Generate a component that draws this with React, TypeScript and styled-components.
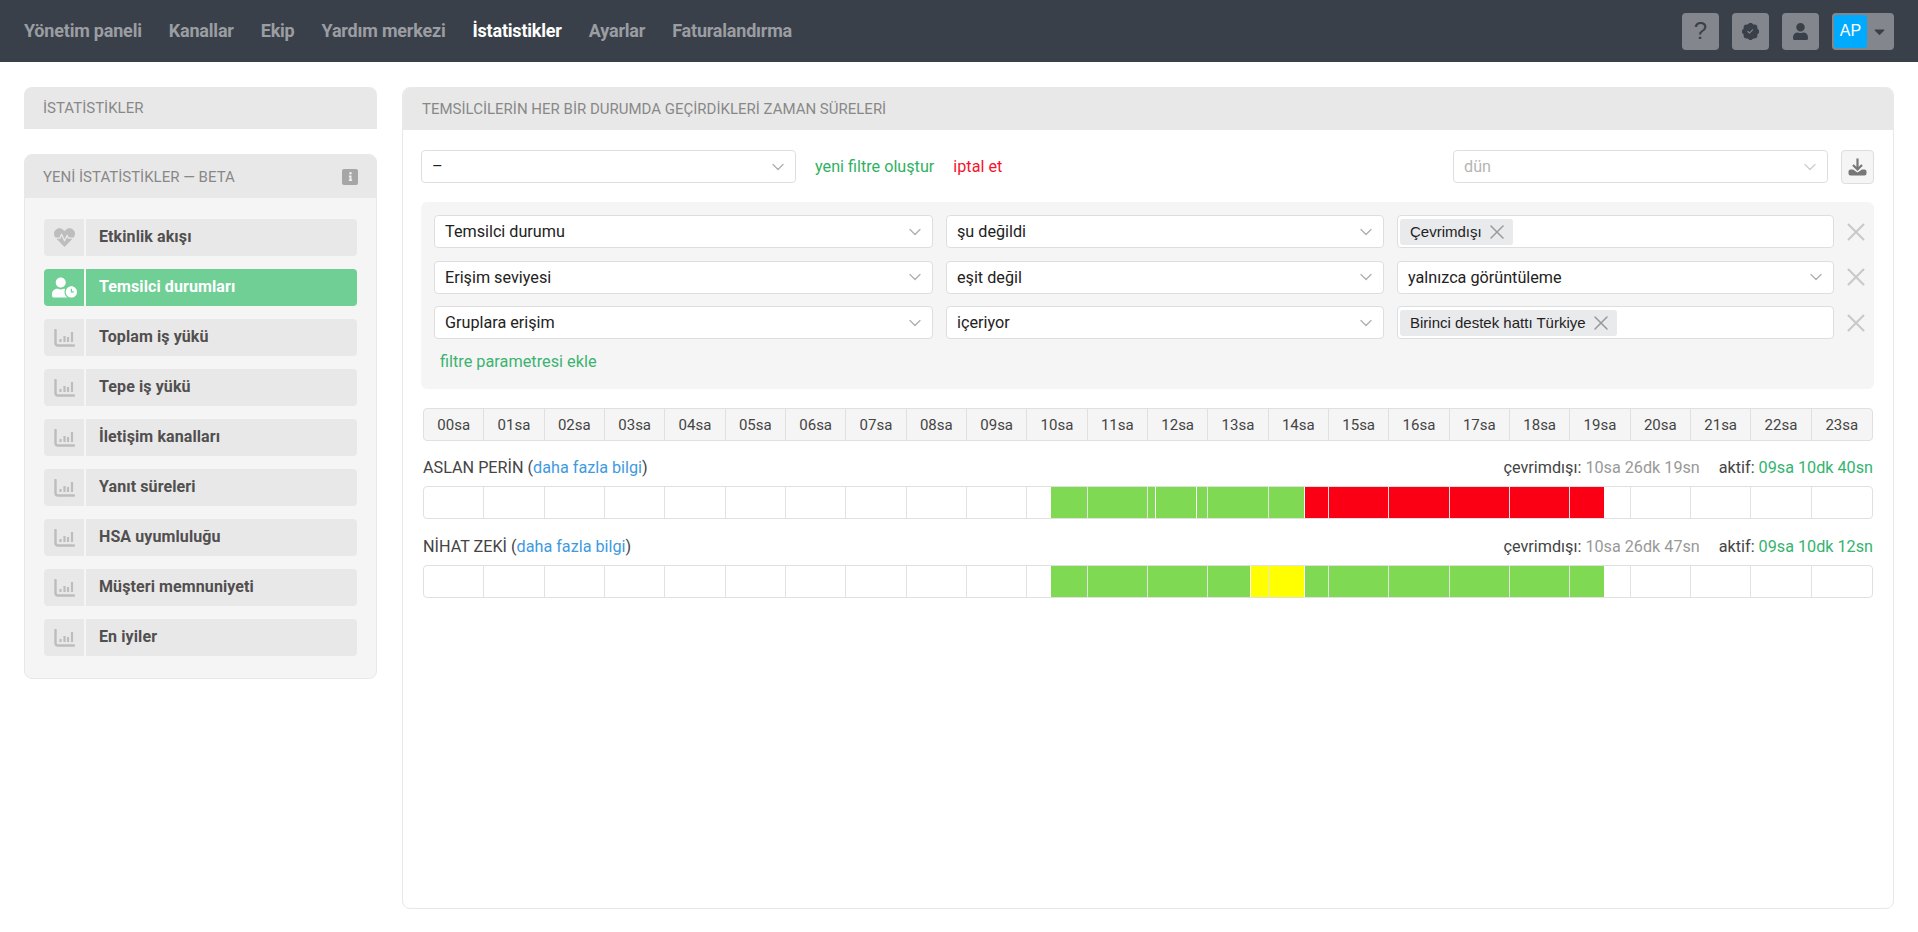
import styled, { createGlobalStyle } from 'styled-components'
import { FaCaretDown, FaHeartbeat, FaInfo, FaUser, FaUserClock } from 'react-icons/fa'
import { BsPatchCheckFill } from 'react-icons/bs'
import { LuChevronDown, LuX } from 'react-icons/lu'

const GlobalStyle = createGlobalStyle`
    html, body {
        margin: 0;
        padding: 0;
        background: #fff;
        font-family: Roboto, "Liberation Sans", sans-serif;
        color: #333;
    }

    * {
        box-sizing: border-box;
    }
`

const TopBar = styled.header`
    height: 62px;
    background-color: #3a4049;
    display: flex;
    align-items: center;
    justify-content: space-between;
    padding: 0 24px;
`

const Nav = styled.nav`
    display: flex;
    gap: 27px;
    margin-top: -2px;
`

const NavLink = styled.a<{ $active?: boolean }>`
    font-size: 18px;
    font-weight: 700;
    letter-spacing: -0.2px;
    color: ${(p) => (p.$active ? '#fff' : '#9a9da2')};
`

const Actions = styled.div`
    display: flex;
    gap: 13px;
`

const ActionButton = styled.button`
    width: 37px;
    height: 37px;
    border: none;
    border-radius: 4px;
    padding: 0;
    background-color: #83878d;
    color: #3a4049;
    display: flex;
    align-items: center;
    justify-content: center;
    font-family: 'Liberation Sans', sans-serif;
    font-size: 24px;
`

const UserButton = styled(ActionButton)`
    width: 62px;
    padding: 2px;
    justify-content: flex-start;
`

const Avatar = styled.span`
    width: 33px;
    height: 33px;
    border-radius: 3px;
    background-color: #00aaff;
    color: #fff;
    font-size: 16px;
    display: flex;
    align-items: center;
    justify-content: center;
`

const Caret = styled.span`
    flex: 1;
    display: flex;
    justify-content: center;
    font-size: 17px;
`

const Page = styled.div`
    display: flex;
    gap: 25px;
    padding: 25px 24px;
    align-items: flex-start;
`

const Sidebar = styled.aside`
    width: 353px;
    flex-shrink: 0;
`

const SideTitle = styled.div`
    height: 42px;
    display: flex;
    align-items: center;
    padding-left: 19px;
    background-color: #e8e8e8;
    border-radius: 8px 8px 0 0;
    font-size: 15px;
    color: #888;
`

const SidePanel = styled.section`
    margin-top: 25px;
    background-color: #f5f5f5;
    border: 1px solid #e8e8e8;
    border-radius: 8px;
    overflow: hidden;
`

const SidePanelHead = styled.div`
    height: 43px;
    background-color: #e8e8e8;
    display: flex;
    align-items: center;
    justify-content: space-between;
    padding: 0 18px;
    font-size: 15px;
    color: #888;
`

const InfoBadge = styled.span`
    width: 16px;
    height: 16px;
    border-radius: 2px;
    background-color: #a6a6a6;
    color: #eee;
    font-size: 9px;
    display: flex;
    align-items: center;
    justify-content: center;
`

const SideList = styled.div`
    display: flex;
    flex-direction: column;
    gap: 13px;
    padding: 21px 19px 22px 19px;
`

const SideItem = styled.a<{ $active?: boolean }>`
    height: 37px;
    display: flex;
    gap: 2px;
    font-size: 16px;
    font-weight: 700;
    letter-spacing: 0.1px;
    color: ${(p) => (p.$active ? '#fff' : '#514f4f')};

    & > span {
        background-color: ${(p) => (p.$active ? '#6fcf95' : '#e8e8e8')};
        display: flex;
        align-items: center;
    }

    & > span:first-child {
        width: 40px;
        justify-content: center;
        border-radius: 4px 0 0 4px;
        color: ${(p) => (p.$active ? '#fff' : '#bdbdbd')};
        font-size: 21px;
    }

    & > span:last-child {
        flex: 1;
        padding: 0 0 2px 13px;
        border-radius: 0 4px 4px 0;
    }
`

const Main = styled.main`
    flex: 1;
    height: 822px;
    border: 1px solid #e8e8e8;
    border-radius: 8px;
    overflow: hidden;
`

const MainHead = styled.div`
    height: 42px;
    background-color: #e8e8e8;
    display: flex;
    align-items: center;
    padding-left: 19px;
    font-size: 15px;
    color: #888;
`

const MainBody = styled.div`
    padding: 20px 19px 0 18px;
`

const Toolbar = styled.div`
    display: flex;
    align-items: center;
    height: 33px;
    font-size: 16.2px;
`

const SelectBox = styled.div<{ $width?: number; $muted?: boolean }>`
    width: ${(p) => (p.$width ? `${p.$width}px` : '100%')};
    height: 33px;
    background-color: #fff;
    border: 1px solid #dedede;
    border-radius: 4px;
    display: flex;
    align-items: center;
    justify-content: space-between;
    padding: 0 7px 0 10px;
    font-size: 16.2px;
    color: ${(p) => (p.$muted ? '#b5b5b5' : '#222')};

    & svg {
        color: ${(p) => (p.$muted ? '#cfcfcf' : '#b0b0b0')};
        font-size: 20px;
        stroke-width: 1.6;
        flex-shrink: 0;
    }
`

const TagBox = styled(SelectBox)`
    justify-content: flex-start;
    padding: 0 2px;
`

const Tag = styled.span`
    height: 26px;
    display: flex;
    align-items: center;
    gap: 3px;
    padding: 0 4px 0 10px;
    border-radius: 3px;
    background-color: #e9eaec;
    font-family: 'Liberation Sans', sans-serif;
    font-size: 15px;
    color: #222;

    & svg {
        font-size: 24px;
        stroke-width: 1.5;
        color: #999;
    }
`

const TextLink = styled.a<{ $color: string }>`
    color: ${(p) => p.$color};
    font-size: 16.2px;
    margin-left: 19px;
`

const Spacer = styled.span`
    flex: 1;
`

const DownloadButton = styled.button`
    width: 33px;
    height: 34px;
    margin-left: 13px;
    padding: 0;
    border: 1px solid #dedede;
    border-radius: 4px;
    background-color: #f5f5f5;
    display: flex;
    align-items: center;
    justify-content: center;
`

const FilterBox = styled.div`
    margin-top: 19px;
    background-color: #f5f5f5;
    border-radius: 6px;
    padding: 13px 13px 17px 13px;
`

const FilterRows = styled.div`
    display: flex;
    flex-direction: column;
    gap: 12.5px;
`

const FilterRow = styled.div`
    display: grid;
    grid-template-columns: 499px 438px 437px 1fr;
    column-gap: 13px;
    align-items: center;
`

const RemoveButton = styled.span`
    display: flex;
    justify-content: center;
    margin-left: -6px;
    font-size: 30px;
    color: #c8c8c8;

    & svg {
        stroke-width: 1.6;
    }
`

const AddFilter = styled.a`
    display: block;
    margin: 13px 0 0 6px;
    line-height: 20px;
    font-size: 16.3px;
    color: #3cb371;
`

const Timeline = styled.div`
    padding: 0 1px 0 2px;
`

const HourStrip = styled.div`
    margin-top: 19px;
    height: 33px;
    display: grid;
    grid-template-columns: repeat(24, 1fr);
    background-color: #f5f5f5;
    border: 1px solid #e0e0e0;
    border-radius: 4px;
    overflow: hidden;
`

const Hour = styled.span`
    display: flex;
    align-items: center;
    justify-content: center;
    padding-top: 1px;
    font-size: 15px;
    color: #444;
    border-right: 1px solid #e0e0e0;

    &:last-child {
        border-right: none;
    }
`

const Agent = styled.div`
    margin-top: 17px;

    & + & {
        margin-top: 18px;
    }
`

const AgentHead = styled.div`
    display: flex;
    justify-content: space-between;
    line-height: 20px;
    font-size: 16.2px;
    color: #444;

    & a {
        color: #3d9ae0;
    }
`

const Totals = styled.div`
    display: flex;
    gap: 19px;
`

const Value = styled.span<{ $color: string }>`
    color: ${(p) => p.$color};
`

const Track = styled.div`
    position: relative;
    margin-top: 8px;
    height: 33px;
    border: 1px solid #e0e0e0;
    border-radius: 4px;
    overflow: hidden;
    display: grid;
    grid-template-columns: repeat(24, 1fr);
`

const Segment = styled.span<{ $color: string }>`
    position: absolute;
    top: 0;
    bottom: 0;
    background-color: ${(p) => p.$color};
`

const Cell = styled.span`
    position: relative;
    border-right: 1px solid #e2e2e2;

    &:last-child {
        border-right: none;
    }
`

const GREEN = '#7fd952'
const RED = '#fb0014'
const YELLOW = '#ffff00'

const hours = Array.from({ length: 24 }, (_, i) => `${String(i).padStart(2, '0')}sa`)

const statItems = [
    'Toplam iş yükü',
    'Tepe iş yükü',
    'İletişim kanalları',
    'Yanıt süreleri',
    'HSA uyumluluğu',
    'Müşteri memnuniyeti',
    'En iyiler',
]

const filters = [
    { field: 'Temsilci durumu', op: 'şu değildi', tag: 'Çevrimdışı' },
    { field: 'Erişim seviyesi', op: 'eşit değil', value: 'yalnızca görüntüleme' },
    { field: 'Gruplara erişim', op: 'içeriyor', tag: 'Birinci destek hattı Türkiye' },
]

const agents = [
    {
        name: 'ASLAN PERİN',
        offline: '10sa 26dk 19sn',
        active: '09sa 10dk 40sn',
        segments: [
            { from: 627, to: 731, color: GREEN },
            { from: 732, to: 772, color: GREEN },
            { from: 773, to: 880, color: GREEN },
            { from: 881, to: 1180, color: RED },
        ],
    },
    {
        name: 'NİHAT ZEKİ',
        offline: '10sa 26dk 47sn',
        active: '09sa 10dk 12sn',
        segments: [
            { from: 627, to: 826, color: GREEN },
            { from: 827, to: 880, color: YELLOW },
            { from: 881, to: 1180, color: GREEN },
        ],
    },
]

const ChartIcon = () => (
    <svg width="21" height="18" viewBox="0 0 21 18" fill="none" stroke="currentColor">
        <path d="M1.5 1v13a2.5 2.5 0 0 0 2.5 2.5h16" strokeWidth="2.4" strokeLinecap="round" />
        <path d="M6.5 13v-3M10.5 13v-6M14 13v-5M18 13v-10" strokeWidth="2.2" />
    </svg>
)

const DownloadIcon = () => (
    <svg width="19" height="18" viewBox="0 0 19 18" fill="none">
        <path d="M9.5 0.5v10M5 7l4.5 4.5L14 7" stroke="#777" strokeWidth="2.2" />
        <path
            d="M2.5 11.5h2.5l4.5 3 4.5-3h2.5a2 2 0 0 1 2 2v2a2 2 0 0 1-2 2h-14a2 2 0 0 1-2-2v-2a2 2 0 0 1 2-2z"
            fill="#777"
        />
    </svg>
)

export default function App() {
    return (
        <>
            <GlobalStyle />
            <TopBar>
                <Nav>
                    <NavLink>Yönetim paneli</NavLink>
                    <NavLink>Kanallar</NavLink>
                    <NavLink>Ekip</NavLink>
                    <NavLink>Yardım merkezi</NavLink>
                    <NavLink $active>İstatistikler</NavLink>
                    <NavLink>Ayarlar</NavLink>
                    <NavLink>Faturalandırma</NavLink>
                </Nav>
                <Actions>
                    <ActionButton>?</ActionButton>
                    <ActionButton>
                        <BsPatchCheckFill size={17} />
                    </ActionButton>
                    <ActionButton>
                        <FaUser size={17} />
                    </ActionButton>
                    <UserButton>
                        <Avatar>AP</Avatar>
                        <Caret>
                            <FaCaretDown />
                        </Caret>
                    </UserButton>
                </Actions>
            </TopBar>

            <Page>
                <Sidebar>
                    <SideTitle>İSTATİSTİKLER</SideTitle>
                    <SidePanel>
                        <SidePanelHead>
                            YENİ İSTATİSTİKLER — BETA
                            <InfoBadge>
                                <FaInfo />
                            </InfoBadge>
                        </SidePanelHead>
                        <SideList>
                            <SideItem>
                                <span>
                                    <FaHeartbeat />
                                </span>
                                <span>Etkinlik akışı</span>
                            </SideItem>
                            <SideItem $active>
                                <span>
                                    <FaUserClock size={25} />
                                </span>
                                <span>Temsilci durumları</span>
                            </SideItem>
                            {statItems.map((item) => (
                                <SideItem key={item}>
                                    <span>
                                        <ChartIcon />
                                    </span>
                                    <span>{item}</span>
                                </SideItem>
                            ))}
                        </SideList>
                    </SidePanel>
                </Sidebar>

                <Main>
                    <MainHead>TEMSİLCİLERİN HER BİR DURUMDA GEÇİRDİKLERİ ZAMAN SÜRELERİ</MainHead>
                    <MainBody>
                        <Toolbar>
                            <SelectBox $width={375}>
                                –
                                <LuChevronDown />
                            </SelectBox>
                            <TextLink $color="#2fb25f">yeni filtre oluştur</TextLink>
                            <TextLink $color="#f5132c">iptal et</TextLink>
                            <Spacer />
                            <SelectBox $width={375} $muted>
                                dün
                                <LuChevronDown />
                            </SelectBox>
                            <DownloadButton>
                                <DownloadIcon />
                            </DownloadButton>
                        </Toolbar>

                        <FilterBox>
                            <FilterRows>
                                {filters.map((f) => (
                                    <FilterRow key={f.field}>
                                        <SelectBox>
                                            {f.field}
                                            <LuChevronDown />
                                        </SelectBox>
                                        <SelectBox>
                                            {f.op}
                                            <LuChevronDown />
                                        </SelectBox>
                                        {f.tag ? (
                                            <TagBox>
                                                <Tag>
                                                    {f.tag}
                                                    <LuX />
                                                </Tag>
                                            </TagBox>
                                        ) : (
                                            <SelectBox>
                                                {f.value}
                                                <LuChevronDown />
                                            </SelectBox>
                                        )}
                                        <RemoveButton>
                                            <LuX />
                                        </RemoveButton>
                                    </FilterRow>
                                ))}
                            </FilterRows>
                            <AddFilter>filtre parametresi ekle</AddFilter>
                        </FilterBox>

                        <Timeline>
                            <HourStrip>
                                {hours.map((h) => (
                                    <Hour key={h}>{h}</Hour>
                                ))}
                            </HourStrip>

                            {agents.map((agent) => (
                                <Agent key={agent.name}>
                                    <AgentHead>
                                        <span>
                                            {agent.name} (<a>daha fazla bilgi</a>)
                                        </span>
                                        <Totals>
                                            <span>
                                                çevrimdışı: <Value $color="#999">{agent.offline}</Value>
                                            </span>
                                            <span>
                                                aktif: <Value $color="#35b36f">{agent.active}</Value>
                                            </span>
                                        </Totals>
                                    </AgentHead>
                                    <Track>
                                        {agent.segments.map((s) => (
                                            <Segment
                                                key={s.from}
                                                $color={s.color}
                                                style={{ left: s.from, width: s.to - s.from }}
                                            />
                                        ))}
                                        {hours.map((h) => (
                                            <Cell key={h} />
                                        ))}
                                    </Track>
                                </Agent>
                            ))}
                        </Timeline>
                    </MainBody>
                </Main>
            </Page>
        </>
    )
}
